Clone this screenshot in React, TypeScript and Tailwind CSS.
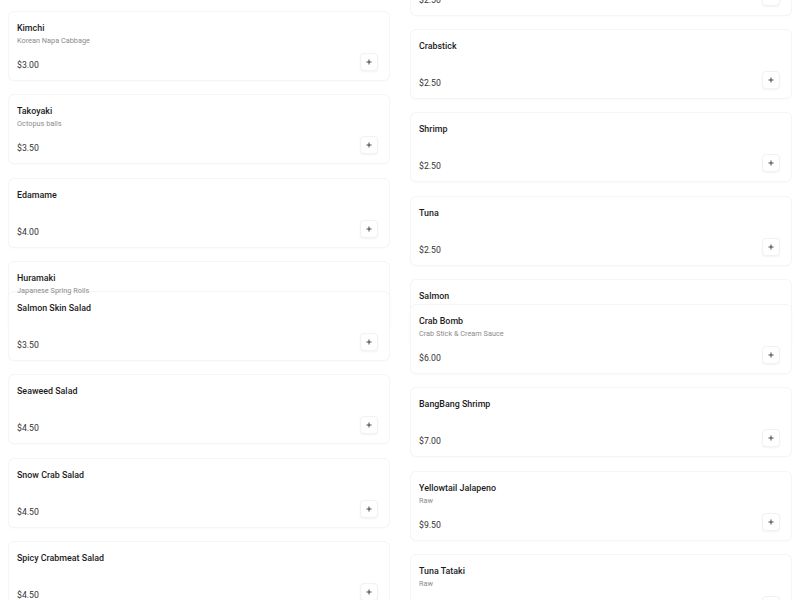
import React from "react";

type Item = { name: string; desc?: string; price: string; overlap?: string; under?: boolean };

const left: Item[] = [
  { name: "Kimchi", desc: "Korean Napa Cabbage", price: "$3.00" },
  { name: "Takoyaki", desc: "Octopus balls", price: "$3.50" },
  { name: "Edamame", price: "$4.00" },
  { name: "Huramaki", desc: "Japanese Spring Rolls", price: "$3.50", under: true },
  { name: "Salmon Skin Salad", price: "$3.50", overlap: "mt-[-53.33px]" },
  { name: "Seaweed Salad", price: "$4.50" },
  { name: "Snow Crab Salad", price: "$4.50" },
  { name: "Spicy Crabmeat Salad", price: "$4.50" },
];

const right: Item[] = [
  { name: "Octopus", price: "$2.50" },
  { name: "Crabstick", price: "$2.50" },
  { name: "Shrimp", price: "$2.50" },
  { name: "Tuna", price: "$2.50" },
  { name: "Salmon", price: "$2.50", under: true },
  { name: "Crab Bomb", desc: "Crab Stick & Cream Sauce", price: "$6.00", overlap: "mt-[-58.33px]" },
  { name: "BangBang Shrimp", price: "$7.00" },
  { name: "Yellowtail Jalapeno", desc: "Raw", price: "$9.50" },
  { name: "Tuna Tataki", desc: "Raw", price: "$9.00" },
];

function Plus() {
  return (
    <svg width="6" height="6" viewBox="0 0 6 6" fill="none">
      <path d="M3 0.5V5.5M0.5 3H5.5" stroke="#333" strokeWidth="0.9" />
    </svg>
  );
}

function Card({ item }: { item: Item }) {
  return (
    <div
      className={`mb-[13.33px] flex h-[70px] flex-col rounded-[6px] border border-[#f5f5f5] bg-white pl-[8px] pr-[11px] pt-[9px] shadow-[0_1px_2px_rgba(0,0,0,0.02)] ${item.overlap ?? ""}`}
    >
      <div className="h-[14px] text-[8.9px] font-medium leading-[14px] text-[#1c1c1c]">{item.name}</div>
      <div className="h-[12px] text-[7.33px] leading-[12px] text-[#8c8c8c]">{item.desc ?? ""}</div>
      {!item.under && (
        <div className="mt-[6px] flex h-[18px] items-center justify-between">
          <span className="pt-[6px] text-[8.7px] leading-[12px] text-[#333]">{item.price}</span>
          <button className="flex h-[18px] w-[18px] items-center justify-center rounded-[4px] border border-[#f2f2f2] bg-white shadow-[0_1px_2px_rgba(0,0,0,0.05)]">
            <Plus />
          </button>
        </div>
      )}
    </div>
  );
}

export default function App() {
  return (
    <div
      className="h-[600px] w-[800px] overflow-hidden bg-white"
      style={{ fontFamily: "Roboto, 'Noto Sans', sans-serif" }}
    >
      <div className="grid grid-cols-2 gap-x-[20px] px-[8px] pt-[11px]">
        <div className="block">
          {left.map((it) => (
            <Card key={it.name} item={it} />
          ))}
        </div>
        <div className="mt-[-65.33px] block">
          {right.map((it) => (
            <Card key={it.name} item={it} />
          ))}
        </div>
      </div>
    </div>
  );
}
